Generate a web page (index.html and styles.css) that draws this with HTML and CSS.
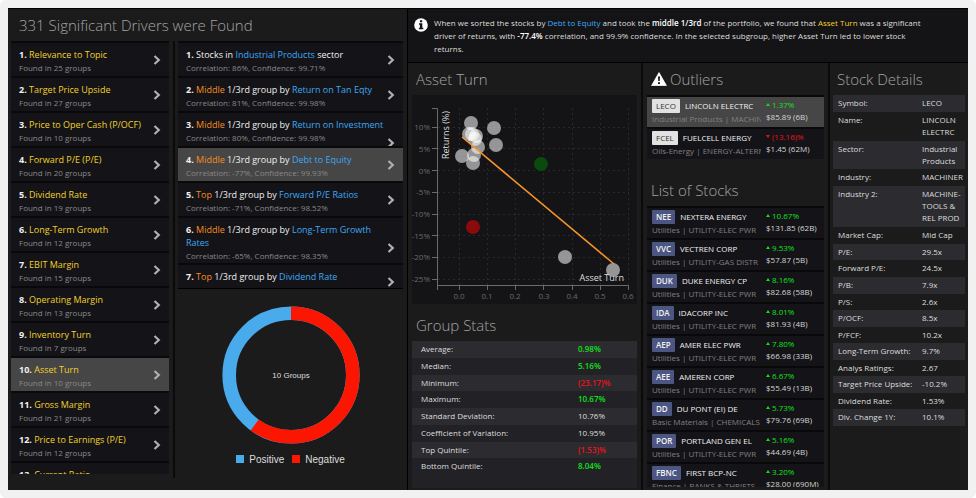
FILE: index.html
```html
<!DOCTYPE html>
<html lang="en">
<head>
<meta charset="utf-8">
<title>Significant Drivers</title>
<link rel="stylesheet" href="styles.css">
</head>
<body>
<svg class="defs" aria-hidden="true"><symbol id="chev" viewBox="0 0 8 10"><path d="M1.5 1 L5.8 5 L1.5 9" fill="none" stroke="currentColor" stroke-width="2.2"/></symbol></svg>
<main class="app">
  <section class="drivers">
    <h1 class="title drivers-title">331 Significant Drivers were Found</h1>
    <div class="driver-cols">
      <ol class="list factor-list">
        <li><button class="row"><span class="text"><b>1.</b> <em class="factor">Relevance to Topic</em><small>Found in 25 groups</small></span><svg class="chev"><use href="#chev"/></svg></button></li>
        <li><button class="row"><span class="text"><b>2.</b> <em class="factor">Target Price Upside</em><small>Found in 27 groups</small></span><svg class="chev"><use href="#chev"/></svg></button></li>
        <li><button class="row"><span class="text"><b>3.</b> <em class="factor">Price to Oper Cash (P/OCF)</em><small>Found in 10 groups</small></span><svg class="chev"><use href="#chev"/></svg></button></li>
        <li><button class="row"><span class="text"><b>4.</b> <em class="factor">Forward P/E (P/E)</em><small>Found in 20 groups</small></span><svg class="chev"><use href="#chev"/></svg></button></li>
        <li><button class="row"><span class="text"><b>5.</b> <em class="factor">Dividend Rate</em><small>Found in 19 groups</small></span><svg class="chev"><use href="#chev"/></svg></button></li>
        <li><button class="row"><span class="text"><b>6.</b> <em class="factor">Long-Term Growth</em><small>Found in 12 groups</small></span><svg class="chev"><use href="#chev"/></svg></button></li>
        <li><button class="row"><span class="text"><b>7.</b> <em class="factor">EBIT Margin</em><small>Found in 15 groups</small></span><svg class="chev"><use href="#chev"/></svg></button></li>
        <li><button class="row"><span class="text"><b>8.</b> <em class="factor">Operating Margin</em><small>Found in 13 groups</small></span><svg class="chev"><use href="#chev"/></svg></button></li>
        <li><button class="row"><span class="text"><b>9.</b> <em class="factor">Inventory Turn</em><small>Found in 7 groups</small></span><svg class="chev"><use href="#chev"/></svg></button></li>
        <li><button class="row selected"><span class="text"><b>10.</b> <em class="factor">Asset Turn</em><small>Found in 10 groups</small></span><svg class="chev"><use href="#chev"/></svg></button></li>
        <li><button class="row"><span class="text"><b>11.</b> <em class="factor">Gross Margin</em><small>Found in 21 groups</small></span><svg class="chev"><use href="#chev"/></svg></button></li>
        <li><button class="row"><span class="text"><b>12.</b> <em class="factor">Price to Earnings (P/E)</em><small>Found in 12 groups</small></span><svg class="chev"><use href="#chev"/></svg></button></li>
        <li><button class="row"><span class="text"><b>13.</b> <em class="factor">Current Ratio</em></span></button></li>
      </ol>
      <div class="groups">
        <ol class="list group-list">
          <li><button class="row"><span class="text"><b>1.</b> Stocks in <em class="ref">Industrial Products</em> sector<small>Correlation: 86%, Confidence: 99.71%</small></span><svg class="chev"><use href="#chev"/></svg></button></li>
          <li><button class="row"><span class="text"><b>2.</b> <em class="tier">Middle</em> 1/3rd group by <em class="ref">Return on Tan Eqty</em><small>Correlation: 81%, Confidence: 99.98%</small></span><svg class="chev"><use href="#chev"/></svg></button></li>
          <li><button class="row wide"><span class="text"><b>3.</b> <em class="tier">Middle</em> 1/3rd group by <em class="ref">Return on Investment</em><small>Correlation: 80%, Confidence: 99.98%</small></span><svg class="chev"><use href="#chev"/></svg></button></li>
          <li><button class="row selected"><span class="text"><b>4.</b> <em class="tier">Middle</em> 1/3rd group by <em class="ref">Debt to Equity</em><small>Correlation: -77%, Confidence: 99.93%</small></span><svg class="chev"><use href="#chev"/></svg></button></li>
          <li><button class="row"><span class="text"><b>5.</b> <em class="tier">Top</em> 1/3rd group by <em class="ref">Forward P/E Ratios</em><small>Correlation: -71%, Confidence: 98.52%</small></span><svg class="chev"><use href="#chev"/></svg></button></li>
          <li><button class="row wide tall"><span class="text"><b>6.</b> <em class="tier">Middle</em> 1/3rd group by <em class="ref">Long-Term Growth Rates</em><small>Correlation: -65%, Confidence: 98.35%</small></span><svg class="chev"><use href="#chev"/></svg></button></li>
          <li><button class="row"><span class="text"><b>7.</b> <em class="tier">Top</em> 1/3rd group by <em class="ref">Dividend Rate</em></span><svg class="chev"><use href="#chev"/></svg></button></li>
        </ol>
        <figure class="donut">
          <svg class="ring" viewBox="0 0 138 138" role="img" aria-label="10 groups: 4 positive, 6 negative">
            <circle cx="69" cy="69" r="61.8" fill="none" stroke="#4aabec" stroke-width="13.6"/>
            <circle cx="69" cy="69" r="61.8" fill="none" stroke="#fa1600" stroke-width="13.6" pathLength="100" stroke-dasharray="60 40" transform="rotate(-90 69 69)"/>
            <text x="69" y="72" text-anchor="middle" class="ring-label">10 Groups</text>
          </svg>
          <figcaption class="legend"><span class="key positive">Positive</span><span class="key negative">Negative</span></figcaption>
        </figure>
      </div>
    </div>
  </section>

  <section class="analysis">
    <div class="summary">
      <svg class="info" viewBox="0 0 14 14" aria-hidden="true"><circle cx="7" cy="7" r="6.8" fill="#fff"/><path d="M5.9 2.2h2.3v2H5.9zM5 5.3h3.3v4.5h1v1.5H4.9V9.8h1V6.8H5z" fill="#141416"/></svg>
      <p>When we sorted the stocks by <a class="ref" href="#">Debt to Equity</a> and took the <b>middle 1/3rd</b> of the portfolio, we found that <a class="factor" href="#">Asset Turn</a> was a significant driver of returns, with <b>-77.4%</b> correlation, and 99.9% confidence. In the selected subgroup, higher Asset Turn led to lower stock returns.</p>
    </div>
    <div class="panels">
      <div class="panel chart-panel">
        <h2 class="title">Asset Turn</h2>
        <svg class="chart" viewBox="0 0 225 209" role="img" aria-label="Returns against Asset Turn">
          <g class="grid">
            <path d="M47.5 13V190M75.5 13V190M103.5 13V190M131.5 13V190M160.5 13V190M188.5 13V190M216.5 13V190"/>
            <path d="M26 32.5H217M26 53.5H217M26 75.5H217M26 97.5H217M26 119.5H217M26 140.5H217M26 162.5H217M26 184.5H217"/>
          </g>
          <g class="axis">
            <path d="M20 13.5H25.5V195M20 32.5H25M20 53.5H25M20 75.5H25M20 97.5H25M20 119.5H25M20 140.5H25M20 162.5H25M20 184.5H25"/>
            <path d="M25 190.5H216.5V195M47.5 190V195M75.5 190V195M103.5 190V195M131.5 190V195M160.5 190V195M188.5 190V195"/>
          </g>
          <g class="ticks" text-anchor="end">
            <text x="18" y="35">10%</text><text x="18" y="57">5%</text><text x="18" y="79">0%</text><text x="18" y="100">-5%</text><text x="18" y="122">-10%</text><text x="18" y="144">-15%</text><text x="18" y="165">-20%</text><text x="18" y="187">-25%</text>
          </g>
          <g class="ticks" text-anchor="middle">
            <text x="47" y="204">0.0</text><text x="75" y="204">0.1</text><text x="103" y="204">0.2</text><text x="132" y="204">0.3</text><text x="160" y="204">0.4</text><text x="188" y="204">0.5</text><text x="216" y="204">0.6</text>
          </g>
          <g class="dots">
            <circle cx="59" cy="28" r="7"/><circle cx="82" cy="33" r="7"/><circle cx="84" cy="50" r="7"/><circle cx="50" cy="61" r="7"/><circle cx="61" cy="68" r="7"/><circle cx="66" cy="52" r="7"/><circle cx="57" cy="39" r="7"/><circle cx="60" cy="39" r="7"/><circle cx="64" cy="41" r="7"/><circle cx="62" cy="60" r="7"/><circle cx="63" cy="44" r="7"/><circle cx="153" cy="162" r="7"/><circle cx="201" cy="175" r="7"/>
          </g>
          <circle cx="129" cy="69" r="7" fill="#0a4a0c"/>
          <circle cx="61" cy="132" r="7" fill="#8b0a0c"/>
          <path d="M50 42L202 169" stroke="#f8932c" stroke-width="1.6"/>
          <text class="axis-name" x="212" y="186" text-anchor="end">Asset Turn</text>
          <text class="axis-name" transform="translate(37 64) rotate(-90)">Returns (%)</text>
        </svg>
        <h2 class="title stats-title">Group Stats</h2>
        <div class="stats">
          <table class="facts stats-table">
            <tr><th>Average:</th><td class="up">0.98%</td></tr>
            <tr><th>Median:</th><td class="up">5.16%</td></tr>
            <tr><th>Minimum:</th><td class="down">(23.17)%</td></tr>
            <tr><th>Maximum:</th><td class="up">10.67%</td></tr>
            <tr><th>Standard Deviation:</th><td>10.76%</td></tr>
            <tr><th>Coefficient of Variation:</th><td>10.95%</td></tr>
            <tr><th>Top Quintile:</th><td class="down">(1.53)%</td></tr>
            <tr><th>Bottom Quintile:</th><td class="up">8.04%</td></tr>
          </table>
        </div>
      </div>

      <div class="panel stock-panel">
        <h2 class="title outliers-title"><svg class="warn" viewBox="0 0 16 14" aria-hidden="true"><path d="M8 .6L15.4 13.6H.6z" fill="#fff" stroke="#fff" stroke-width=".8" stroke-linejoin="round"/><path d="M7 4.6h2l-.3 4.4H7.3zM7 10.2h2v1.9H7z" fill="#141416"/></svg>Outliers</h2>
        <ul class="list stocks outliers">
          <li><button class="stock selected"><span class="who"><b class="badge">LECO</b><span>LINCOLN ELECTRC</span><small>Industrial Products | MACHINE</small></span><span class="quote"><span class="gain">1.37%</span>$85.89 (6B)</span></button></li>
          <li><button class="stock"><span class="who"><b class="badge">FCEL</b><span>FUELCELL ENERGY</span><small>Oils-Energy | ENERGY-ALTERNA</small></span><span class="quote"><span class="loss">(13.16)%</span>$1.45 (62M)</span></button></li>
        </ul>
        <h2 class="title list-title">List of Stocks</h2>
        <ul class="list stocks portfolio">
          <li><button class="stock"><span class="who"><b class="badge">NEE</b><span>NEXTERA ENERGY</span><small>Utilities | UTILITY-ELEC PWR</small></span><span class="quote"><span class="gain">10.67%</span>$131.85 (62B)</span></button></li>
          <li><button class="stock"><span class="who"><b class="badge">VVC</b><span>VECTREN CORP</span><small>Utilities | UTILITY-GAS DISTR</small></span><span class="quote"><span class="gain">9.53%</span>$57.87 (5B)</span></button></li>
          <li><button class="stock"><span class="who"><b class="badge">DUK</b><span>DUKE ENERGY CP</span><small>Utilities | UTILITY-ELEC PWR</small></span><span class="quote"><span class="gain">8.16%</span>$82.68 (58B)</span></button></li>
          <li><button class="stock"><span class="who"><b class="badge">IDA</b><span>IDACORP INC</span><small>Utilities | UTILITY-ELEC PWR</small></span><span class="quote"><span class="gain">8.01%</span>$81.93 (4B)</span></button></li>
          <li><button class="stock"><span class="who"><b class="badge">AEP</b><span>AMER ELEC PWR</span><small>Utilities | UTILITY-ELEC PWR</small></span><span class="quote"><span class="gain">7.80%</span>$66.98 (33B)</span></button></li>
          <li><button class="stock"><span class="who"><b class="badge">AEE</b><span>AMEREN CORP</span><small>Utilities | UTILITY-ELEC PWR</small></span><span class="quote"><span class="gain">6.67%</span>$55.49 (13B)</span></button></li>
          <li><button class="stock"><span class="who"><b class="badge">DD</b><span>DU PONT (EI) DE</span><small>Basic Materials | CHEMICALS</small></span><span class="quote"><span class="gain">5.73%</span>$79.76 (69B)</span></button></li>
          <li><button class="stock"><span class="who"><b class="badge">POR</b><span>PORTLAND GEN EL</span><small>Utilities | UTILITY-ELEC PWR</small></span><span class="quote"><span class="gain">5.16%</span>$44.69 (4B)</span></button></li>
          <li><button class="stock"><span class="who"><b class="badge">FBNC</b><span>FIRST BCP-NC</span><small>Finance | BANKS &amp; THRIFTS</small></span><span class="quote"><span class="gain">3.20%</span>$28.00 (690M)</span></button></li>
        </ul>
      </div>

      <div class="panel detail-panel">
        <h2 class="title">Stock Details</h2>
        <table class="facts details">
          <tr><th>Symbol:</th><td>LECO</td></tr>
          <tr><th>Name:</th><td>LINCOLN ELECTRC</td></tr>
          <tr><th>Sector:</th><td>Industrial Products</td></tr>
          <tr><th>Industry:</th><td>MACHINER</td></tr>
          <tr><th>Industry 2:</th><td>MACHINE-TOOLS &amp; REL PROD</td></tr>
          <tr><th>Market Cap:</th><td>Mid Cap</td></tr>
          <tr><th>P/E:</th><td>29.5x</td></tr>
          <tr><th>Forward P/E:</th><td>24.5x</td></tr>
          <tr><th>P/B:</th><td>7.9x</td></tr>
          <tr><th>P/S:</th><td>2.6x</td></tr>
          <tr><th>P/OCF:</th><td>8.5x</td></tr>
          <tr><th>P/FCF:</th><td>10.2x</td></tr>
          <tr><th>Long-Term Growth:</th><td>9.7%</td></tr>
          <tr><th>Analys Ratings:</th><td>2.67</td></tr>
          <tr><th>Target Price Upside:</th><td>-10.2%</td></tr>
          <tr><th>Dividend Rate:</th><td>1.53%</td></tr>
          <tr><th>Div. Change 1Y:</th><td>10.1%</td></tr>
        </table>
      </div>
    </div>
  </section>
</main>
</body>
</html>
```
FILE: styles.css
```css
* { box-sizing: border-box; }

html { background: #fff; }

body {
  margin: 0;
  padding: 8px;
  height: 100vh;
  overflow: hidden;
  border-radius: 6px;
  background: #f1f1f1;
  color: #dedede;
  font-family: "Open Sans", "Liberation Sans", sans-serif;
  font-size: 8px;
  line-height: 12px;
}

.defs { display: none; }

.app {
  display: grid;
  grid-template-columns: 399fr 561fr;
  height: 100%;
  overflow: hidden;
  background: #1b1b1c;
  border-top: 1px solid #000;
}

.title {
  margin: 0;
  padding: 4px 4px 0;
  height: 32px;
  font-size: 15px;
  font-weight: 300;
  line-height: 24px;
  color: #a4a4a4;
  white-space: nowrap;
}

.drivers-title { padding-left: 8px; }

em { font-style: normal; }
a { text-decoration: none; }
.factor { color: #f2d02c; }
.ref { color: #3ea8f4; }
.tier { color: #f58c22; }
.up, .gain { color: #12e01a; }
.down, .loss { color: #ea131a; }

.list {
  margin: 0;
  padding: 0;
  list-style: none;
  overflow: hidden;
}

button {
  display: grid;
  width: 100%;
  margin: 0;
  border: 0;
  border-top: 2px solid #09090b;
  background: #141418;
  color: #f0f0f0;
  font: inherit;
  text-align: left;
  cursor: pointer;
}

button.selected { background: #464646; }

/* Drivers */
.drivers {
  display: flex;
  flex-direction: column;
  min-height: 0;
  padding-left: 3px;
}

.driver-cols {
  flex: 1;
  display: grid;
  grid-template-columns: 162px 1fr;
  min-height: 0;
  padding-bottom: 12px;
}

.factor-list { margin: 0 4px 4px 0; }

.groups {
  border-left: 2px solid #0a0a0b;
  padding: 0 4px 0 3px;
}

.group-list {
  max-height: 248px;
  border-bottom: 1px solid #000;
}

.row {
  height: 35px;
  padding: 5px 8px 0;
  font-size: 9px;
  line-height: 13px;
  align-content: start;
  overflow: hidden;
}

.row.tall { height: 47px; }
.row .text { grid-area: 1 / 1; }
.row b { font-weight: 700; }
.row small {
  display: block;
  font-size: 8px;
  color: #888;
}

.chev {
  grid-area: 1 / 1;
  justify-self: end;
  width: 8px;
  height: 10px;
  margin-top: 7px;
  color: #b0b0b0;
}

.wide .chev { margin-top: 20px; }

.donut {
  display: grid;
  justify-items: center;
  gap: 10px;
  margin: 17px 0 0;
}

.ring { width: 138px; height: 138px; }
.ring-label { font: 8px "Liberation Sans", sans-serif; fill: #ddd; }

.legend {
  display: flex;
  gap: 8px;
  font: 10px/12px "Liberation Sans", sans-serif;
}

.key::before {
  content: "";
  display: inline-block;
  width: 8px;
  height: 8px;
  margin-right: 5px;
  background: #4aabec;
}

.key.negative::before { background: #fa1600; }

/* Analysis */
.analysis {
  display: flex;
  flex-direction: column;
  min-width: 0;
  min-height: 0;
  border-left: 1px solid #000;
}

.summary {
  display: flex;
  gap: 6px;
  padding: 7px 36px 7px 6px;
  background: #141416;
  border-bottom: 1px solid #000;
}

.summary p {
  margin: 0;
  line-height: 13px;
}

.summary b { font-weight: 600; color: #fff; }
.info { flex: none; width: 14px; height: 14px; margin-top: 2px; }

.panels {
  flex: 1;
  display: grid;
  grid-template-columns: 233px 187px 1fr;
  min-height: 0;
}

.panel {
  min-width: 0;
  min-height: 0;
  padding: 0 4px;
  overflow: hidden;
}

.panel + .panel { border-left: 2px solid #0a0a0b; }

.chart-panel, .stock-panel { display: flex; flex-direction: column; }
.detail-panel { padding: 0 3px; }

.chart {
  display: block;
  width: 100%;
  background: #141416;
}

.grid { fill: none; stroke: #29292b; stroke-dasharray: 2 3; }
.axis { fill: none; stroke: #6a6a6a; }
.ticks { font-size: 8px; fill: #6a6a6a; }
.dots { fill: #fff; fill-opacity: .55; }
.axis-name { font-size: 9px; fill: #ddd; }

.stats-title { margin-top: 5px; }

.stats {
  flex: 1;
  margin-bottom: 2px;
  background: #222226;
}

.facts {
  width: 100%;
  border-collapse: collapse;
  table-layout: fixed;
}

.facts tr:nth-child(odd) { background: #2b2b30; }

.facts th, .facts td {
  padding: 2px 0;
  font-weight: 400;
  text-align: left;
  vertical-align: top;
}

.facts th { white-space: nowrap; }
.facts td.up, .facts td.down { font-weight: 600; }

.stats-table { height: 134px; }
.stats-table th { width: 166px; padding-left: 9px; }

.details { height: 331px; }
.details th { width: 89px; padding-left: 5px; }

.outliers-title { display: flex; gap: 3px; }
.warn { width: 16px; height: 14px; margin: 5px 0 0; }

.outliers, .list-title, .outliers-title { flex: none; }
.list-title { margin-top: 15px; }
.portfolio { flex: 1; margin-bottom: 3px; }

.stock {
  grid-template-columns: minmax(0, 1fr) 58px;
  gap: 5px;
  height: 32px;
  padding: 2px 0 0 5px;
}

.who { white-space: nowrap; }

.who small {
  display: block;
  font-size: 8px;
  color: #808080;
  overflow: hidden;
}

.badge {
  display: inline-block;
  height: 14px;
  margin-right: 5px;
  padding: 0 4px;
  border-radius: 1px;
  background: #4c5682;
  color: #f2f2f2;
  font-weight: 600;
  line-height: 14px;
}

.outliers .badge { background: #e2e2e2; color: #333; font-weight: 400; }

.quote { white-space: nowrap; color: #d4d4d4; }
.gain, .loss { display: block; }

.gain::before, .loss::before {
  content: "";
  display: inline-block;
  margin: 0 2px 2px 0;
  border: 2px solid transparent;
  border-top-width: 0;
  border-bottom: 3px solid #12dc1a;
}

.loss::before {
  border-top: 3px solid #e2131a;
  border-bottom-width: 0;
}
```
